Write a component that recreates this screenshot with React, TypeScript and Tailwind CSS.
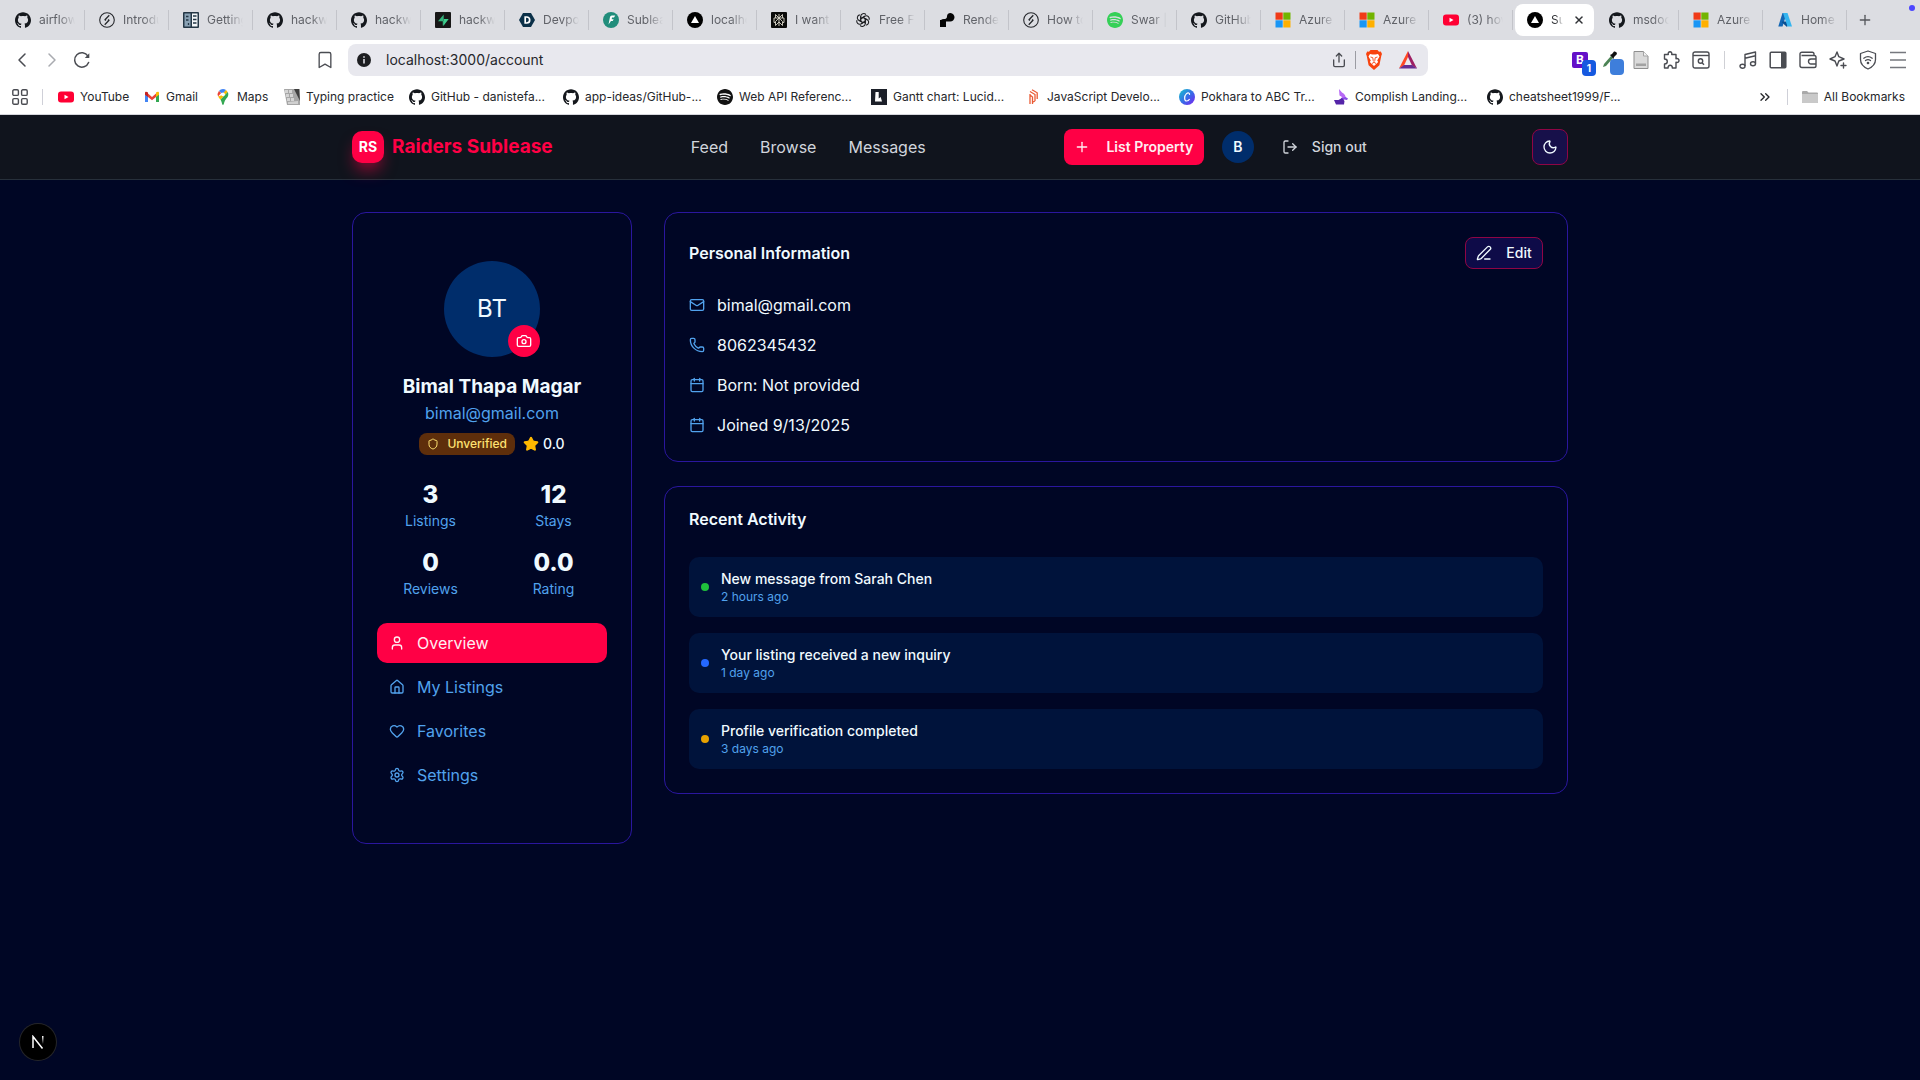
import type { ReactNode } from "react";
import {
  Bookmark, Calendar, Camera, ChevronLeft, ChevronRight, ChevronsRight, Heart, House, LogOut, Mail, Moon,
  PenLine, Phone, Plus, Settings, Share, Shield, Star, User, X,
} from "lucide-react";
import { SiGithub, SiSpotify } from "react-icons/si";

const GitHub = () => <SiGithub className="size-4 text-[#15181d]" />;
const YouTube = () => (
  <svg viewBox="0 0 16 16" className="size-4"><rect y="2.5" width="16" height="11" rx="3" fill="#f03" /><path d="M6.5 5.7v4.6l4-2.3z" fill="#fff" /></svg>
);
const Microsoft = () => (
  <svg viewBox="0 0 16 16" className="size-4">
    <path d="M.5.5h7.2v7.2H.5z" fill="#f03a17" /><path d="M8.3.5h7.2v7.2H8.3z" fill="#72b400" />
    <path d="M.5 8.3h7.2v7.2H.5z" fill="#1a96f5" /><path d="M8.3 8.3h7.2v7.2H8.3z" fill="#ffb000" />
  </svg>
);
const Bolt = () => (
  <svg viewBox="0 0 16 16" className="size-4" fill="none" stroke="#26282c" strokeWidth="1.1" strokeLinejoin="round">
    <circle cx="8" cy="8" r="7.3" /><path d="M10.300 3.300 6 7.700l1 .7M5.700 12.700 10 8.300l-1-.7" strokeWidth="1.3" />
  </svg>
);
const Vercel = () => (
  <svg viewBox="0 0 16 16" className="size-4"><circle cx="8" cy="8" r="8" fill="#000" /><path d="m8 4 4 7H4z" fill="#fff" /></svg>
);
const Ledger = () => (
  <svg viewBox="0 0 16 16" className="size-4">
    <rect width="16" height="16" rx="1" fill="#253746" /><path d="M1.500 1.500h6v13h-6z" fill="#8aa2b5" /><path d="M9 1.500h5.500v13H9z" fill="#f3f6f8" />
    <path d="M10 4h3.500M10 7.500h3.500M10 11h3.500M3 4.500h2.500M3 8h2.500M5.500 11v2" stroke="#253746" strokeWidth="1.3" />
  </svg>
);
const Supabase = () => (
  <svg viewBox="0 0 16 16" className="size-4">
    <rect width="16" height="16" rx="1" fill="#171717" />
    <path d="M8.700 2.500v11l5-6.500h-5z" fill="#3ecf8e" /><path d="M8.700 2.500 3 9.300h5.700z" fill="#34b27b" /><path d="M7.800 9h1v4.500h-1z" fill="#3ecf8e" />
  </svg>
);
const Devpost = () => (
  <svg viewBox="0 0 16 16" className="size-4"><path d="M4 1h8l4 7-4 7H4L0 8z" fill="#0b3048" /><path d="M6.200 5v6h1.500a3 3 0 0 0 0-6z" fill="none" stroke="#fff" strokeWidth="1.700" /></svg>
);
const Feather = () => (
  <svg viewBox="0 0 16 16" className="size-4"><circle cx="8" cy="8" r="8" fill="#218d7b" /><path d="M5.500 12.500 7 5q.3-1.500 1.800-1.500h3.400L11 5.500H9L8.700 7.300h2L9.700 9H8z" fill="#fff" /></svg>
);
const Perplexity = () => (
  <svg viewBox="0 0 16 16" className="size-4">
    <rect width="16" height="16" rx="1" fill="#0b0b0a" />
    <path d="M8 2v12M4.500 2.500 8 6l3.500-3.500V6h-7zM8 6l-3.500 3.500v4L8 10l3.500 3.500v-4zM4.500 6H3v4.500h1.500M11.500 6H13v4.500h-1.500" fill="none" stroke="#d9d6c8" strokeWidth=".9" />
  </svg>
);
const OpenAI = () => (
  <svg viewBox="0 0 16 16" className="size-4" fill="none" stroke="#202124" strokeWidth="1.100">
    {[0, 60, 120, 180, 240, 300].map((a) => (
      <path key={a} d="M5.700 9.300V4.200a2.900 2.900 0 0 1 5.200-1.500M5.700 6.700l4.300-2.500" transform={`rotate(${a} 8 8)`} />
    ))}
  </svg>
);
const Render = () => (
  <svg viewBox="0 0 16 16" className="size-4"><path d="M11.500 1A3.500 3.500 0 0 0 8 4.500C8 6.500 6.500 7 5 7a4 4 0 0 0-4 4v4h6V9.500h4A4.200 4.200 0 1 0 11.500 1M1 8v7h6V8z" fill="#050505" /></svg>
);
const Azure = () => (
  <svg viewBox="0 0 16 16" className="size-4">
    <path d="M5.500 1h4.300L5.500 14.500H1.300z" fill="#1266b4" /><path d="M5 9.500h7L10 15l-5-4.500z" fill="#0a4f91" /><path d="M6 1h4.500L15 14.500h-4.500z" fill="#35b5ef" />
  </svg>
);
const Gmail = () => (
  <svg viewBox="0 0 16 16" className="size-4">
    <path d="M1 4v9h3V6z" fill="#4285f4" /><path d="M15 4v9h-3V6z" fill="#34a853" />
    <path d="M4 4.500 8 8l4-3.500V8l-4 3.300L4 8z" fill="#ea4335" /><path d="M1 4.500V4c0-1.600 1.600-1.600 3-.5V8L1 5.800z" fill="#c5221f" /><path d="M15 4.500V4c0-1.600-1.600-1.600-3-.5V8l3-2.200z" fill="#fbbc04" />
  </svg>
);
const Maps = () => (
  <svg viewBox="0 0 16 16" className="size-4">
    <path d="M8 0a5.300 5.300 0 0 0-4.100 2L8 5.200 11 1A5 5 0 0 0 8 0" fill="#4285f4" /><path d="M3.900 2a5.300 5.300 0 0 0-.8 5.500l3-3.500z" fill="#ea4335" />
    <path d="M3.100 7.500c.6 1.300 1.700 2.200 2.400 3.300L12.700 3 11 1 6 6.500z" fill="#fbbc04" /><path d="M12.700 3 5.500 10.800C7 13 7 16 8 16s1-3 2.500-5.200S13.300 8 13.300 5.300q0-1.300-.6-2.300" fill="#34a853" />
    <circle cx="8" cy="5.300" r="1.900" fill="#fff" />
  </svg>
);
const Keyboard = () => (
  <svg viewBox="0 0 16 16" className="size-4">
    <path d="M0 0h16v16H3z" fill="#a6a6a6" /><path d="M1 1h3v3H1zm4 0h3v3H5zM2 5h3v3H2zm4 0h3v3H6zM3 9h3v3H3zm4 0h3v3H7z" fill="#d4d4d4" />
    <path d="M10 0h5l1 12z" fill="#3e3e3e" /><path d="m4 13 10-1v3H4z" fill="#d0d0d0" />
  </svg>
);
const Lucid = () => (
  <svg viewBox="0 0 16 16" className="size-4"><rect width="16" height="16" fill="#1c2029" /><path d="M4.500 3h3.200v6.500l2-1.500 1.300 4.500h-7z" fill="#fff" /></svg>
);
const Pillar = () => (
  <svg viewBox="0 0 16 16" className="size-4" fill="none" stroke="#ea5b35" strokeWidth="1.300"><path d="M5 5v10M7.500 15V8L5 6M5 2.500l5 3V12M7 .8l5.200 3V10M10 12l-2 1" /></svg>
);
const Canva = () => (
  <svg viewBox="0 0 16 16" className="size-4">
    <defs><linearGradient id="canva" x1="0" y1="0" x2="1" y2="1"><stop stopColor="#12c5cc" /><stop offset=".55" stopColor="#3a67e8" /><stop offset="1" stopColor="#7d1ff0" /></linearGradient></defs>
    <circle cx="8" cy="8" r="8" fill="url(#canva)" /><path d="M10.500 5.800c.5-2-1.500-2.500-3-1.200C5 7 5 12 7.700 12c1.300 0 2.300-.9 2.900-2" fill="none" stroke="#fff" strokeWidth="1.200" />
  </svg>
);
const Unicorn = () => (
  <svg viewBox="0 0 16 16" className="size-4">
    <path d="m6 0 3 3.500c3 1.500 4 3.500 3.500 6l-5 1L9 8 6.500 6.500z" fill="#b768f5" /><path d="m8 9.500 4.500-1.500 2.500 1.500-1 1.500-3-.5-1 2z" fill="#8a4be6" /><path d="M1 11h4.500L9 9l2.500 3-.5 3.500H3z" fill="#5424a8" />
  </svg>
);
const Spotify = ({ tone }: { tone: "green" | "dark" }) => (
  <SiSpotify className={tone === "green" ? "size-4 text-[#35d057]" : "size-4 text-[#121212]"} />
);

type Tab = { title: string; icon: ReactNode };
const tabs: Tab[] = [
  { title: "airflow", icon: <GitHub /> },
  { title: "Introdu", icon: <Bolt /> },
  { title: "Getting", icon: <Ledger /> },
  { title: "hackwe", icon: <GitHub /> },
  { title: "hackwe", icon: <GitHub /> },
  { title: "hackwe", icon: <Supabase /> },
  { title: "Devpos", icon: <Devpost /> },
  { title: "Subleas", icon: <Feather /> },
  { title: "localho", icon: <Vercel /> },
  { title: "I want t", icon: <Perplexity /> },
  { title: "Free Fi", icon: <OpenAI /> },
  { title: "Render", icon: <Render /> },
  { title: "How to", icon: <Bolt /> },
  { title: "Swar |", icon: <Spotify tone="green" /> },
  { title: "GitHub", icon: <GitHub /> },
  { title: "Azure", icon: <Microsoft /> },
  { title: "Azure", icon: <Microsoft /> },
  { title: "(3) hov", icon: <YouTube /> },
];
const tabsAfter: Tab[] = [
  { title: "msdoc", icon: <GitHub /> },
  { title: "Azure", icon: <Microsoft /> },
  { title: "Home", icon: <Azure /> },
];

const bookmarks: { title: string; icon: ReactNode; width: string }[] = [
  { title: "YouTube", icon: <YouTube />, width: "w-[86px]" },
  { title: "Gmail", icon: <Gmail />, width: "w-[71px]" },
  { title: "Maps", icon: <Maps />, width: "w-[69px]" },
  { title: "Typing practice", icon: <Keyboard />, width: "w-[125px]" },
  { title: "GitHub - danistefa...", icon: <GitHub />, width: "w-[154px]" },
  { title: "app-ideas/GitHub-...", icon: <GitHub />, width: "w-[154px]" },
  { title: "Web API Referenc...", icon: <Spotify tone="dark" />, width: "w-[154px]" },
  { title: "Gantt chart: Lucid...", icon: <Lucid />, width: "w-[154px]" },
  { title: "JavaScript Develo...", icon: <Pillar />, width: "w-[154px]" },
  { title: "Pokhara to ABC Tr...", icon: <Canva />, width: "w-[154px]" },
  { title: "Complish Landing...", icon: <Unicorn />, width: "w-[154px]" },
  { title: "cheatsheet1999/F...", icon: <GitHub />, width: "w-[154px]" },
];

function BrowserTab({ tab }: { tab: Tab }) {
  return (
    <button className="flex h-5 w-[84px] shrink-0 items-center gap-2 border-r border-[#c3c4ca] pl-[14px] text-xs text-[#606268]">
      <span className="shrink-0">{tab.icon}</span>
      <span className="w-9 overflow-hidden whitespace-nowrap text-left [mask-image:linear-gradient(to_right,black_55%,transparent)]">{tab.title}</span>
    </button>
  );
}

function TabStrip() {
  return (
    <div className="relative flex h-10 items-center overflow-hidden bg-[#dcdde2] pl-px">
      {tabs.map((t, i) => <BrowserTab key={i} tab={t} />)}
      <div className="ml-[2px] flex h-8 w-[79px] shrink-0 items-center gap-2 rounded-lg bg-white pl-3 text-xs text-[#303236]">
        <Vercel />
        <span className="w-3 overflow-hidden whitespace-nowrap [mask-image:linear-gradient(to_right,black_40%,transparent)]">Su</span>
        <button aria-label="Close tab" className="ml-0.5"><X className="size-3" strokeWidth={3} /></button>
      </div>
      <div className="ml-px flex">
        {tabsAfter.map((t, i) => <BrowserTab key={i} tab={t} />)}
      </div>
      <button aria-label="New tab" className="ml-2.5 text-[#55575c]"><Plus className="size-4" strokeWidth={2} /></button>
      <span className="absolute right-[5px] top-[5px] size-1.5 rounded-full bg-[#4b45ff]" />
    </div>
  );
}

const IconButton = ({ label, children }: { label: string; children: ReactNode }) => (
  <button aria-label={label} className="flex w-[30px] shrink-0 items-center justify-center">{children}</button>
);

function Toolbar() {
  return (
    <div className="flex h-10 items-center bg-white px-[7px] text-[#4a4c52]">
      <div className="flex w-[303px] shrink-0 items-center">
        <IconButton label="Back"><ChevronLeft className="size-6" strokeWidth={1.500} /></IconButton>
        <IconButton label="Forward"><ChevronRight className="size-6 text-[#a9abb0]" strokeWidth={1.500} /></IconButton>
        <IconButton label="Reload">
          <svg viewBox="0 0 18 18" className="size-[18px]" fill="none" stroke="currentColor" strokeWidth="1.500" strokeLinecap="round">
            <path d="M15.600 11.500A7.200 7.200 0 1 1 15 5.200" /><path d="M16.300 2.200V7h-4.500z" fill="currentColor" stroke="none" />
          </svg>
        </IconButton>
      </div>
      <IconButton label="Bookmark this page"><Bookmark className="size-5" strokeWidth={1.600} /></IconButton>
      <div className="ml-2 flex h-8 w-[1080px] items-center rounded-lg bg-[#e8e8ee] pl-[9px] pr-[7px]">
        <svg viewBox="0 0 14 14" className="size-[14px] shrink-0"><circle cx="7" cy="7" r="7" fill="#1d1e21" /><path d="M7 6v4.500M7 3.200v1.600" stroke="#e8e8ee" strokeWidth="1.500" /></svg>
        <input aria-label="Address" defaultValue="localhost:3000/account" className="ml-[15px] min-w-0 flex-1 bg-transparent text-sm text-[#26272b] outline-none" />
        <button aria-label="Share"><Share className="size-4" strokeWidth={2} /></button>
        <span className="mx-2 h-[18px] w-px bg-[#9b9ca3]" />
        <button aria-label="Shields" className="ml-0.5">
          <svg viewBox="0 0 16 20" className="h-5 w-4"><path d="M4.500 0h7L13 1.700l1.800-.2L16 4l-.7 1.700-1.900 9.600L8 20l-5.400-4.700L.7 5.700 0 4l1.200-2.500 1.800.2z" fill="#f8430e" /><path d="m4 4 2.500.6H9.500L12 4l1.500 2.600-2.300 4 1 1.500L8 16l-4.200-3.900 1-1.500-2.300-4z" fill="#fff" /><path d="m4.500 7 2.300.7.400 2.800.8 1 .8-1 .4-2.800 2.300-.7M6 13.500l2-1.200 2 1.200" fill="none" stroke="#f8430e" strokeWidth=".9" /></svg>
        </button>
        <button aria-label="Rewards" className="ml-[17px] mr-1">
          <svg viewBox="0 0 18 18" className="size-[18px]"><path d="M9 0 0 17.500l5-3L9 6z" fill="#ff4724" /><path d="m9 0 9 17.500-5-3L9 6z" fill="#9e1f63" /><path d="M0 17.500h18l-5-3.500H5z" fill="#662d91" /></svg>
        </button>
      </div>
      <div className="ml-auto flex items-center">
        <button aria-label="Password manager" className="relative mr-px w-[30px]">
          <span className="ml-[6px] flex size-4 items-center justify-center rounded-xs bg-[#6410c8] text-xs font-bold leading-none text-white">B</span>
          <span className="absolute -bottom-2 right-0 flex h-4 w-[14px] items-center justify-center rounded-sm bg-[#1659e0] text-[10px] font-bold text-white">1</span>
        </button>
        <button aria-label="Color picker" className="relative w-[29px]">
          <svg viewBox="0 0 18 18" className="ml-1 size-[18px]"><path d="m2 16 1-3 7-8 2 2-7 8z" fill="#4c8355" /><path d="m9 4 2-1 2-2.500q3-.5 3 2.500l-3 3-.5 2z" fill="#111" /></svg>
          <span className="absolute -bottom-[6px] right-[2px] h-4 w-[14px] rounded-sm bg-[#3e7edb]" />
        </button>
        <IconButton label="Notes">
          <svg viewBox="0 0 16 18" className="h-[18px] w-4"><path d="M1 .5h9.500L15 5v12.500H1z" fill="#dadada" stroke="#8f8f8f" /><path d="M10.500.5V5H15" fill="#f2f2f2" stroke="#a5a5a5" /><path d="M3 12.500h10v2.500H3z" fill="#a2a2a2" /></svg>
        </IconButton>
        <IconButton label="Extensions">
          <svg viewBox="0 0 18 18" className="size-[18px]" fill="none" stroke="currentColor" strokeWidth="1.400" strokeLinejoin="round">
            <path d="M2.500 3.500h3.800C5.800 1.700 6.800.8 8 .8s2.200.9 1.700 2.700h4.300v4.200c1.900-.5 3 .5 3 1.800s-1.100 2.300-3 1.800V17h-3.700c.2-1.700-.8-2.700-2.100-2.700S5.900 15.300 6.100 17H2.500v-4c1.800 0 2.800-1 2.800-2.500s-1-2.500-2.800-2.500z" />
          </svg>
        </IconButton>
        <IconButton label="Search tabs">
          <svg viewBox="0 0 18 18" className="size-[18px]" fill="none" stroke="currentColor" strokeWidth="1.400"><rect x="1" y="1" width="16" height="16" rx="2" /><path d="M1 4.500h16" /><circle cx="8.500" cy="10" r="2.200" /><path d="m10 11.700 2 2" /></svg>
        </IconButton>
        <span className="mx-[8px] h-[18px] w-px bg-[#cfd0d5]" />
        <IconButton label="Playlist">
          <svg viewBox="0 0 18 18" className="size-[18px]" fill="none" stroke="currentColor" strokeWidth="1.400" strokeLinejoin="round"><ellipse cx="3.500" cy="15.200" rx="2.500" ry="2" /><ellipse cx="14" cy="12.800" rx="2.500" ry="2" /><path d="M6 15V3.500L16.500 1v11.500M6 7.200l10.500-2.500" /></svg>
        </IconButton>
        <IconButton label="Sidebar">
          <svg viewBox="0 0 18 18" className="size-[18px]"><rect x="1.200" y="1.200" width="15.600" height="15.600" rx="1" fill="none" stroke="currentColor" strokeWidth="1.500" /><path d="M12 1.500h5v15h-5z" fill="currentColor" /></svg>
        </IconButton>
        <IconButton label="Wallet">
          <svg viewBox="0 0 18 18" className="size-[18px]" fill="none" stroke="currentColor" strokeWidth="1.400" strokeLinejoin="round"><path d="M15 4.500V3q0-1.800-1.800-1.800H3Q1 1.200 1 3v11.500q0 2 2 2h12.200q1.800 0 1.800-1.800V6.300q0-1.800-1.800-1.800H2.500" /><path d="M17 8h-5a2.500 2.500 0 0 0 0 5h5" /></svg>
        </IconButton>
        <IconButton label="Assistant">
          <svg viewBox="0 0 18 18" className="size-[18px]" fill="none" stroke="currentColor" strokeWidth="1.400" strokeLinejoin="round" strokeLinecap="round"><path d="m8 1 1.800 4.700L15 8l-5.200 2L8 15l-2-5L1 8l5-2.300zM14.500 12v5M12 14.500h5" /></svg>
        </IconButton>
        <IconButton label="VPN">
          <svg viewBox="0 0 18 20" className="h-5 w-[18px]" fill="none" stroke="currentColor" strokeWidth="1.300" strokeLinejoin="round" strokeLinecap="round"><path d="m9 1 7.500 2.500v6c0 4.500-3 7.500-7.500 9.500-4.500-2-7.500-5-7.500-9.500v-6z" /><path d="M4.800 8.200q4.200-3.200 8.400 0M6.500 10.500q2.500-1.900 5 0" /><circle cx="9" cy="13" r=".7" fill="currentColor" /></svg>
        </IconButton>
        <IconButton label="Menu">
          <svg viewBox="0 0 18 18" className="size-[18px]" stroke="#76787e" strokeWidth="1.700"><path d="M1 1.500h16M1 9h16M1 16.500h16" /></svg>
        </IconButton>
      </div>
    </div>
  );
}

function BookmarksBar() {
  return (
    <div className="flex h-[35px] items-center border-b border-[#d5d6dc] bg-white pl-3 pr-[15px] text-xs text-[#26272b]">
      <button aria-label="Apps" className="text-[#4a4c52]">
        <svg viewBox="0 0 16 16" className="size-4" fill="none" stroke="currentColor" strokeWidth="1.400"><rect x=".8" y=".8" width="5.600" height="5.600" rx="1.200" /><rect x="9.600" y=".8" width="5.600" height="5.600" rx="1.200" /><rect x=".8" y="9.600" width="5.600" height="5.600" rx="1.200" /><rect x="9.600" y="9.600" width="5.600" height="5.600" rx="1.200" /></svg>
      </button>
      <span className="ml-[14px] mr-[15px] h-4 w-px shrink-0 bg-[#cfd0d8]" />
      {bookmarks.map((b) => (
        <a key={b.title} href="#" className={`flex shrink-0 items-center gap-1.5 whitespace-nowrap ${b.width}`}>
          <span className="shrink-0">{b.icon}</span>{b.title}
        </a>
      ))}
      <button aria-label="More bookmarks" className="ml-auto"><ChevronsRight className="size-4" strokeWidth={2} /></button>
      <span className="mx-[14px] h-4 w-px bg-[#cfd0d8]" />
      <button className="flex items-center gap-1.5">
        <svg viewBox="0 0 16 16" className="size-4"><path d="M0 3q0-1 1-1h4l1.500 1.500H15q1 0 1 1V13q0 1-1 1H1q-1 0-1-1z" fill="#a9a9a9" /><path d="M0 5h16v8q0 1-1 1H1q-1 0-1-1z" fill="#c9c9c9" /></svg>
        All Bookmarks
      </button>
    </div>
  );
}

function Header() {
  return (
    <header className="border-b border-[#27303b] bg-[#10141d]">
      <div className="mx-auto flex h-16 max-w-7xl items-center justify-between px-8">
        <a href="#" className="flex items-center gap-2">
          <span className="flex size-8 items-center justify-center rounded-[10px] bg-[#ff0045] text-sm font-bold text-white shadow-[0_10px_15px_-3px_rgba(255,0,69,0.5)]">RS</span>
          <span className="text-[19px] font-bold text-[#ff0045]">Raiders Sublease</span>
        </a>
        <nav className="flex gap-8 text-base text-[#d1d5dc]">
          <a href="#">Feed</a><a href="#">Browse</a><a href="#">Messages</a>
        </nav>
        <div className="flex w-[330px] items-center">
          <button className="flex h-9 w-[140px] items-center justify-center gap-4 rounded-lg bg-[#ff0045] text-sm font-semibold text-[#ffeef2]">
            <Plus className="size-4" strokeWidth={2} />List Property
          </button>
          <span className="ml-[18px] flex size-8 items-center justify-center rounded-full bg-[#002d6b] text-sm font-semibold text-[#f0f9ff]">B</span>
          <button className="ml-7 flex items-center gap-[14px] text-sm font-medium text-[#d1d5dc]">
            <LogOut className="size-4" strokeWidth={2} />Sign out
          </button>
        </div>
        <button aria-label="Toggle theme" className="flex size-9 items-center justify-center rounded-lg border border-[#8f0545] bg-[#17104a] text-[#f0f9ff]">
          <Moon className="size-4" strokeWidth={2} />
        </button>
      </div>
    </header>
  );
}

const stats = [["3", "Listings"], ["12", "Stays"], ["0", "Reviews"], ["0.0", "Rating"]];
const sections = [
  { label: "Overview", Icon: User, active: true },
  { label: "My Listings", Icon: House, active: false },
  { label: "Favorites", Icon: Heart, active: false },
  { label: "Settings", Icon: Settings, active: false },
];

function ProfileCard() {
  return (
    <aside className="flex flex-col items-center rounded-[14px] border border-[#2a169e] px-6 py-12">
      <div className="relative flex size-24 items-center justify-center rounded-full bg-[#002d6b] text-2xl text-[#f0faff]">
        BT
        <button aria-label="Change photo" className="absolute bottom-0 right-0 flex size-8 items-center justify-center rounded-full bg-[#ff0045] text-white">
          <Camera className="size-4" strokeWidth={2} />
        </button>
      </div>
      <h1 className="mt-4 text-[19px] font-bold leading-7">Bimal Thapa Magar</h1>
      <p className="text-base leading-6 text-[#51a2ed]">bimal@gmail.com</p>
      <div className="mt-2 flex items-center gap-2">
        <span className="flex h-[22px] items-center gap-2 rounded-lg bg-[#5e2e0b] px-2 text-xs font-medium text-[#ffe272]">
          <Shield className="size-3" strokeWidth={2} />Unverified
        </span>
        <span className="flex items-center gap-1 text-sm font-medium leading-5"><Star className="size-4 fill-[#ffb900] text-[#ffb900]" />0.0</span>
      </div>
      <dl className="mt-6 grid w-full grid-cols-2 gap-4 text-center">
        {stats.map(([value, label]) => (
          <div key={label} className="flex flex-col-reverse">
            <dt className="text-sm text-[#51a2ed]">{label}</dt>
            <dd className="text-2xl font-extrabold">{value}</dd>
          </div>
        ))}
      </dl>
      <nav className="mt-6 flex w-full flex-col gap-1">
        {sections.map(({ label, Icon, active }) => (
          <button key={label} className={active ? "flex h-10 items-center gap-3 rounded-[10px] bg-[#ff0045] px-3 text-[#ffeef2]" : "flex h-10 items-center gap-3 rounded-[10px] px-3 text-[#51a2ed]"}>
            <Icon className="size-4" strokeWidth={2} />{label}
          </button>
        ))}
      </nav>
    </aside>
  );
}

const info = [
  { text: "bimal@gmail.com", Icon: Mail },
  { text: "8062345432", Icon: Phone },
  { text: "Born: Not provided", Icon: Calendar },
  { text: "Joined 9/13/2025", Icon: Calendar },
];
const activity = [
  { text: "New message from Sarah Chen", time: "2 hours ago", dot: "bg-[#1fc13c]" },
  { text: "Your listing received a new inquiry", time: "1 day ago", dot: "bg-[#2468ff]" },
  { text: "Profile verification completed", time: "3 days ago", dot: "bg-[#e8a200]" },
];

export default function App() {
  return (
    <div className="flex min-h-screen flex-col bg-[#000625] font-['Inter',sans-serif] text-[#f0faff]">
      <div>
        <TabStrip />
        <Toolbar />
        <BookmarksBar />
      </div>
      <Header />
      <main className="mx-auto grid w-full max-w-7xl grid-cols-[280px_1fr] items-start gap-8 p-8">
        <ProfileCard />
        <div className="flex flex-col gap-6">
          <section className="rounded-[14px] border border-[#2a169e] p-6">
            <div className="flex items-center justify-between">
              <h2 className="text-base font-semibold">Personal Information</h2>
              <button className="flex h-8 w-[78px] items-center justify-center gap-[14px] rounded-lg border border-[#8f0545] bg-[#0e0b48] text-sm font-medium">
                <PenLine className="size-4" strokeWidth={2} />Edit
              </button>
            </div>
            <ul className="mt-6 flex flex-col gap-4">
              {info.map(({ text, Icon }) => (
                <li key={text} className="flex h-6 items-center gap-3"><Icon className="size-4 text-[#51a2ed]" strokeWidth={2} />{text}</li>
              ))}
            </ul>
          </section>
          <section className="rounded-[14px] border border-[#2a169e] p-6">
            <h2 className="text-base font-semibold leading-4">Recent Activity</h2>
            <ul className="mt-[30px] flex flex-col gap-4">
              {activity.map((a) => (
                <li key={a.text} className="flex items-center gap-3 rounded-[10px] bg-[#00133b] p-3">
                  <span className={`size-2 rounded-full ${a.dot}`} />
                  <div>
                    <p className="text-sm font-medium">{a.text}</p>
                    <p className="text-xs text-[#51a2ed]">{a.time}</p>
                  </div>
                </li>
              ))}
            </ul>
          </section>
        </div>
      </main>
      <button aria-label="Open developer tools" className="fixed bottom-5 left-5 flex size-9 items-center justify-center rounded-full bg-black ring-1 ring-[#252629]">
        <svg viewBox="0 0 14 14" className="size-[14px]" fill="none" strokeWidth="1.500">
          <defs><linearGradient id="stem" x1="0" y1="0" x2="0" y2="1"><stop stopColor="#fff" /><stop offset="1" stopColor="#fff" stopOpacity="0" /></linearGradient></defs>
          <path d="M2 13V1.500L11.500 13.500" stroke="#fff" /><path d="M11 1h1.500v8H11z" fill="url(#stem)" />
        </svg>
      </button>
    </div>
  );
}
